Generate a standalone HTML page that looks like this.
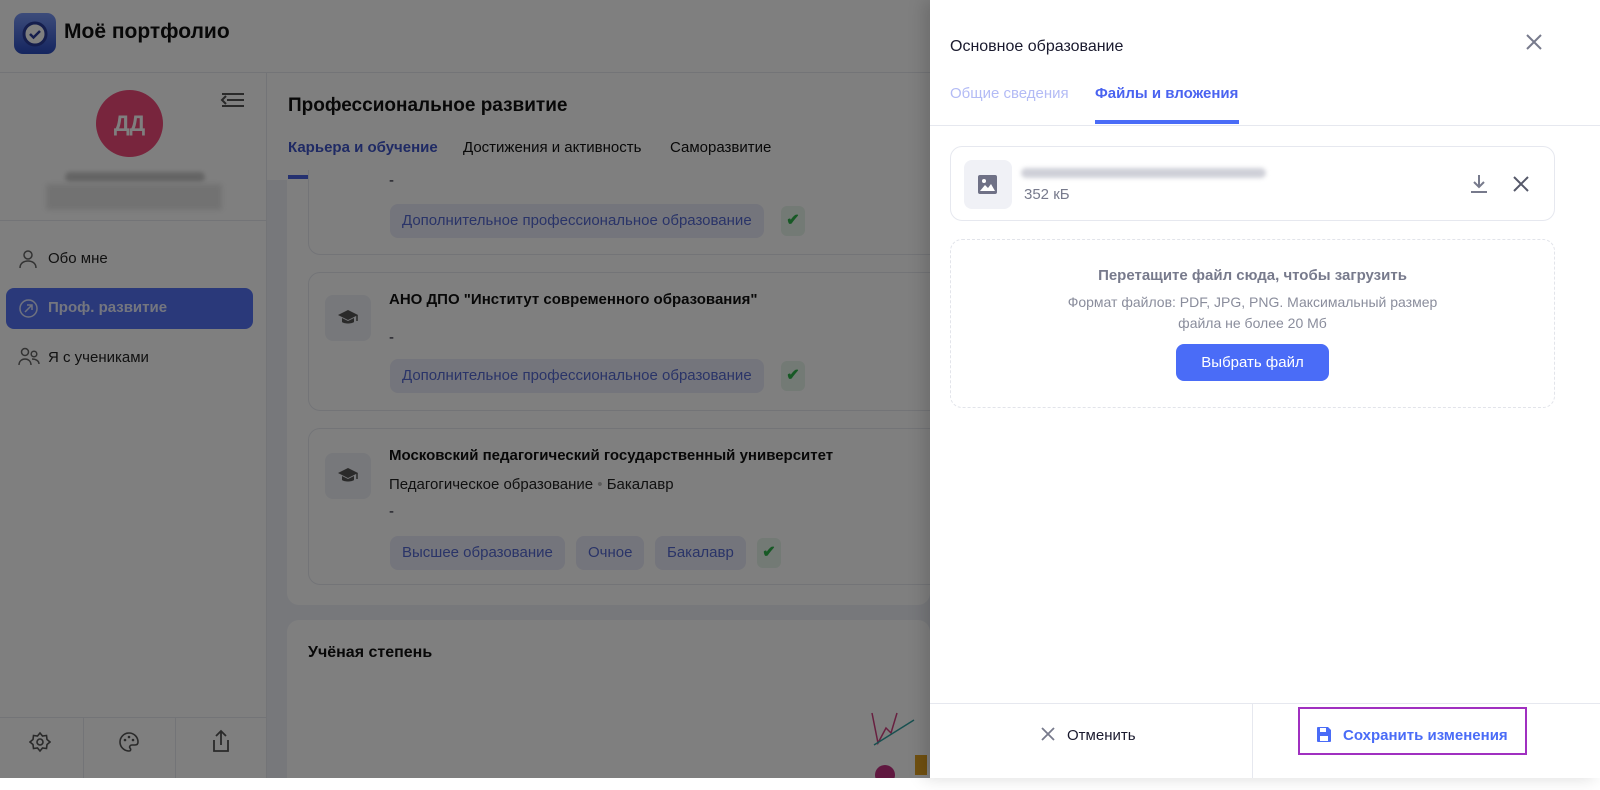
<!DOCTYPE html>
<html><head><meta charset="utf-8"><style>
*{box-sizing:border-box;margin:0;padding:0}
body{width:1600px;height:778px;overflow:hidden;font-family:"Liberation Sans","Noto Sans CJK SC",sans-serif;background:#fff;position:relative;color:#1a1a2e}
.a{position:absolute}
.card{position:absolute;background:#fff;border:1px solid #e6e8ef;border-radius:12px}
.chip{position:absolute;height:34px;line-height:34px;padding:0 12px;background:#e9ebf8;color:#5468d0;border-radius:8px;font-size:15px}
.ok{position:absolute;width:24px;height:30px;background:#e6f4ea;border-radius:6px;color:#2fb34a;font-size:16px;text-align:center;line-height:30px;font-weight:bold}
.ic{position:absolute;width:46px;height:46px;background:#eef0f6;border-radius:8px}
.ic svg{position:absolute;left:12px;top:12px}
.t{position:absolute;font-size:15px}
</style></head><body>
<div class="a" style="left:0;top:0;width:930px;height:778px;background:#fff">
 <div class="a" style="left:14px;top:13px;width:42px;height:41px;border-radius:9px;background:linear-gradient(#7a98f5,#2a4bbf)"></div>
 <svg class="a" style="left:21px;top:20px" width="28" height="28" viewBox="0 0 28 28"><circle cx="14" cy="14" r="11" fill="#fff" stroke="#2a3d9a" stroke-width="3"/><path d="M9 14l3.5 3.5L19 11" fill="none" stroke="#2a3d9a" stroke-width="2.5"/></svg>
 <div class="a" style="left:64px;top:20px;font-size:21px;font-weight:bold;color:#111">Моё портфолио</div>
 <div class="a" style="left:0;top:72px;width:930px;height:1px;background:#e6e8ef"></div>
 <div class="a" style="left:266px;top:72px;width:1px;height:706px;background:#e6e8ef"></div>
 <div class="a" style="left:96px;top:90px;width:67px;height:67px;border-radius:50%;background:#f04b7a;color:#fff;font-weight:bold;font-size:22px;text-align:center;line-height:67px">ДД</div>
 <svg class="a" style="left:220px;top:90px" width="26" height="20" viewBox="0 0 26 20"><path d="M2 4h22M7 10h17M2 16h22M6 6l-4 4 4 4" fill="none" stroke="#555" stroke-width="2"/></svg>
 <div class="a" style="left:65px;top:172px;width:140px;height:10px;background:#c9c9c9;border-radius:5px;filter:blur(2px)"></div>
 <div class="a" style="left:46px;top:184px;width:176px;height:26px;background:#e4e4e4;filter:blur(3px)"></div>
 <div class="a" style="left:0;top:220px;width:266px;height:1px;background:#e6e8ef"></div>
 <svg class="a" style="left:18px;top:249px" width="20" height="20" viewBox="0 0 20 20"><circle cx="10" cy="6" r="4" fill="none" stroke="#666" stroke-width="1.5"/><path d="M2 19c0-5 4-7 8-7s8 2 8 7" fill="none" stroke="#666" stroke-width="1.5"/></svg>
 <div class="t" style="left:48px;top:250px;color:#222">Обо мне</div>
 <div class="a" style="left:6px;top:288px;width:247px;height:41px;background:#5573f5;border-radius:8px"></div>
 <svg class="a" style="left:18px;top:298px" width="21" height="21" viewBox="0 0 21 21"><circle cx="10.5" cy="10.5" r="8.5" fill="none" stroke="#dfe5ff" stroke-width="1.5"/><path d="M7 14l7-7M9 7h5v5" fill="none" stroke="#dfe5ff" stroke-width="1.5"/></svg>
 <div class="t" style="left:48px;top:299px;color:#e8ecff;font-weight:bold">Проф. развитие</div>
 <svg class="a" style="left:18px;top:347px" width="22" height="20" viewBox="0 0 22 20"><circle cx="7" cy="5" r="3.5" fill="none" stroke="#666" stroke-width="1.5"/><circle cx="16" cy="7" r="2.8" fill="none" stroke="#666" stroke-width="1.5"/><path d="M1 18c0-4 3-6 6-6s6 2 6 6M14 12c4 0 7 2 7 5" fill="none" stroke="#666" stroke-width="1.5"/></svg>
 <div class="t" style="left:48px;top:349px;color:#222">Я с учениками</div>
 <div class="a" style="left:0;top:717px;width:266px;height:1px;background:#e6e8ef"></div>
 <div class="a" style="left:83px;top:717px;width:1px;height:61px;background:#e6e8ef"></div>
 <div class="a" style="left:175px;top:717px;width:1px;height:61px;background:#e6e8ef"></div>
 <svg class="a" style="left:29px;top:731px" width="22" height="22" viewBox="0 0 22 22"><path d="M11 2l2.5 3 4-.5.5 4 3 2.5-3 2.5-.5 4-4-.5L11 20l-2.5-3-4 .5-.5-4L1 11l3-2.5.5-4 4 .5z" fill="none" stroke="#555" stroke-width="1.6"/><circle cx="11" cy="11" r="3" fill="none" stroke="#555" stroke-width="1.6"/></svg>
 <svg class="a" style="left:118px;top:731px" width="22" height="22" viewBox="0 0 22 22"><path d="M11 2a9 9 0 000 18c2 0 2-2 1-3s0-3 2-3h3c2 0 3-1 3-3 0-5-4-9-9-9z" fill="none" stroke="#555" stroke-width="1.6"/><circle cx="7" cy="9" r="1.3" fill="#555"/><circle cx="11" cy="6" r="1.3" fill="#555"/><circle cx="15" cy="9" r="1.3" fill="#555"/></svg>
 <svg class="a" style="left:210px;top:729px" width="22" height="24" viewBox="0 0 22 24"><path d="M11 16V2M6 7l5-5 5 5M4 11v11h14V11" fill="none" stroke="#555" stroke-width="1.8"/></svg>
 <div class="a" style="left:288px;top:95px;font-size:19px;font-weight:bold;color:#111">Профессиональное развитие</div>
 <div class="t" style="left:288px;top:139px;color:#3f55c8;font-weight:bold">Карьера и обучение</div>
 <div class="t" style="left:463px;top:139px;color:#111">Достижения и активность</div>
 <div class="t" style="left:670px;top:139px;color:#111">Саморазвитие</div>
 <div class="a" style="left:288px;top:175px;width:151px;height:4px;background:#4a63e0"></div>
 <div class="a" style="left:267px;top:180px;width:663px;height:598px;background:#eef0f6"></div>
 <div class="a" style="left:287px;top:180px;width:643px;height:425px;background:#fff;border-radius:0 0 12px 12px"></div>
 <div class="card" style="left:308px;top:170px;width:640px;height:85px;border-top:none;border-radius:0 0 12px 12px"></div>
 <div class="t" style="left:389px;top:172px">-</div>
 <div class="chip" style="left:390px;top:204px">Дополнительное профессиональное образование</div>
 <div class="ok" style="left:781px;top:206px">✔</div>
 <div class="card" style="left:308px;top:272px;width:640px;height:139px"></div>
 <div class="ic" style="left:325px;top:295px"><svg width="22" height="22" viewBox="0 0 22 22"><path d="M11 3L1 8l10 5 10-5z" fill="#555"/><path d="M5 11v4c2 2 10 2 12 0v-4l-6 3z" fill="#555"/><path d="M20 8v6" stroke="#555" stroke-width="1.5"/></svg></div>
 <div class="t" style="left:389px;top:291px;font-weight:bold;color:#111">АНО ДПО "Институт современного образования"</div>
 <div class="t" style="left:389px;top:329px">-</div>
 <div class="chip" style="left:390px;top:359px">Дополнительное профессиональное образование</div>
 <div class="ok" style="left:781px;top:361px">✔</div>
 <div class="card" style="left:308px;top:428px;width:640px;height:157px"></div>
 <div class="ic" style="left:325px;top:453px"><svg width="22" height="22" viewBox="0 0 22 22"><path d="M11 3L1 8l10 5 10-5z" fill="#555"/><path d="M5 11v4c2 2 10 2 12 0v-4l-6 3z" fill="#555"/><path d="M20 8v6" stroke="#555" stroke-width="1.5"/></svg></div>
 <div class="t" style="left:389px;top:447px;font-weight:bold;color:#111">Московский педагогический государственный университет</div>
 <div class="t" style="left:389px;top:476px;color:#222">Педагогическое образование <span style="color:#bbb">•</span> Бакалавр</div>
 <div class="t" style="left:389px;top:503px">-</div>
 <div class="chip" style="left:390px;top:536px">Высшее образование</div>
 <div class="chip" style="left:576px;top:536px">Очное</div>
 <div class="chip" style="left:655px;top:536px">Бакалавр</div>
 <div class="ok" style="left:757px;top:538px">✔</div>
 <div class="a" style="left:287px;top:620px;width:643px;height:170px;background:#fff;border-radius:12px"></div>
 <div class="a" style="left:308px;top:644px;font-size:16px;font-weight:bold;color:#111">Учёная степень</div>
 <svg class="a" style="left:860px;top:705px" width="70" height="73" viewBox="0 0 70 73"><path d="M12 8l6 30 8-15 5 5 6-20" fill="none" stroke="#d04080" stroke-width="1.5"/><path d="M14 40l40-25" stroke="#30a0a0" stroke-width="1.5"/><circle cx="25" cy="70" r="10" fill="#c03080"/><rect x="55" y="50" width="12" height="20" fill="#e0a020"/></svg>
</div>
<div class="a" style="left:0;top:0;width:930px;height:778px;background:rgba(0,0,0,0.5)"></div>
<div class="a" style="left:930px;top:0;width:670px;height:778px;background:#fff;box-shadow:-6px 0 16px rgba(0,0,0,0.15)">
 <div class="a" style="left:20px;top:38px;font-size:16px;color:#1a1a2e">Основное образование</div>
 <svg class="a" style="left:594px;top:32px" width="20" height="20" viewBox="0 0 20 20"><path d="M3 3l14 14M17 3L3 17" stroke="#777a8c" stroke-width="2"/></svg>
 <div class="t" style="left:20px;top:85px;color:#b3bbf5">Общие сведения</div>
 <div class="t" style="left:165px;top:85px;color:#4a63f0;font-weight:bold">Файлы и вложения</div>
 <div class="a" style="left:165px;top:120px;width:144px;height:4px;background:#4a6cf7"></div>
 <div class="a" style="left:0;top:125px;width:670px;height:1px;background:#e6e8ef"></div>
 <div class="card" style="left:20px;top:146px;width:605px;height:75px"></div>
 <div class="a" style="left:34px;top:160px;width:48px;height:49px;background:#f0f1f6;border-radius:8px"></div>
 <svg class="a" style="left:47px;top:174px" width="21" height="21" viewBox="0 0 21 21"><rect x="1" y="1" width="19" height="19" rx="2" fill="#6f7186"/><circle cx="7" cy="7" r="2" fill="#fff"/><path d="M3 17l5-6 3 3 3-4 4 7z" fill="#fff"/></svg>
 <div class="a" style="left:91px;top:168px;width:245px;height:10px;background:#cfd0d8;border-radius:5px;filter:blur(2px)"></div>
 <div class="t" style="left:94px;top:186px;color:#777a8c">352 кБ</div>
 <svg class="a" style="left:539px;top:173px" width="20" height="22" viewBox="0 0 20 22"><path d="M10 2v12M5 9l5 5 5-5M2 19h16" fill="none" stroke="#777a8c" stroke-width="2"/></svg>
 <svg class="a" style="left:582px;top:175px" width="18" height="18" viewBox="0 0 18 18"><path d="M2 2l14 14M16 2L2 16" stroke="#555869" stroke-width="2"/></svg>
 <div class="a" style="left:20px;top:239px;width:605px;height:169px;border:1.5px dashed #e2e4ea;border-radius:12px"></div>
 <div class="a" style="left:20px;top:267px;width:605px;text-align:center;font-size:15px;font-weight:bold;color:#777a8c">Перетащите файл сюда, чтобы загрузить</div>
 <div class="a" style="left:20px;top:292px;width:605px;text-align:center;font-size:14px;line-height:21px;color:#8a8d9c">Формат файлов: PDF, JPG, PNG. Максимальный размер<br>файла не более 20 Мб</div>
 <div class="a" style="left:246px;top:344px;width:153px;height:37px;background:#4a6cf7;border-radius:8px;color:#fff;text-align:center;line-height:37px;font-size:15px">Выбрать файл</div>
 <div class="a" style="left:0;top:703px;width:670px;height:1px;background:#e6e8ef"></div>
 <div class="a" style="left:322px;top:704px;width:1px;height:74px;background:#e6e8ef"></div>
 <svg class="a" style="left:111px;top:727px" width="14" height="14" viewBox="0 0 14 14"><path d="M1 1l12 12M13 1L1 13" stroke="#777a8c" stroke-width="1.8"/></svg>
 <div class="t" style="left:137px;top:727px;color:#1a1a2e">Отменить</div>
 <div class="a" style="left:368px;top:707px;width:229px;height:48px;border:2px solid #a030c0"></div>
 <svg class="a" style="left:386px;top:726px" width="16" height="17" viewBox="0 0 16 17"><path d="M1 2a1 1 0 011-1h10l3 3v11a1 1 0 01-1 1H2a1 1 0 01-1-1z" fill="#4a6cf7"/><rect x="4" y="2" width="6" height="4" fill="#fff"/><rect x="4" y="10" width="8" height="5" fill="#fff"/></svg>
 <div class="t" style="left:413px;top:727px;color:#4a6cf7;font-weight:bold">Сохранить изменения</div>
</div>
</body></html>
